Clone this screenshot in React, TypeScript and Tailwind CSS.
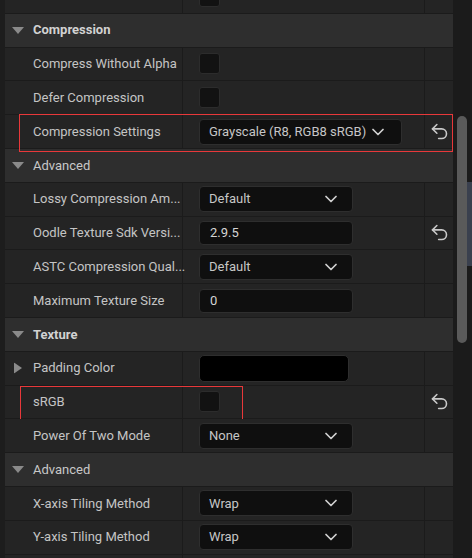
import { ReactNode } from "react";
import { ChevronDown, Undo2 } from "lucide-react";

// --- small widgets ---
function Caret({ open = true }: { open?: boolean }) {
  return open ? (
    <svg width="12" height="7" viewBox="0 0 12 7" className="shrink-0">
      <path d="M0 0h12L6 7z" fill="#8a8a8a" />
    </svg>
  ) : (
    <svg width="8" height="11" viewBox="0 0 8 11" className="shrink-0">
      <path d="M0 0v11l8-5.5z" fill="#8a8a8a" />
    </svg>
  );
}

function Checkbox() {
  return <div className="h-[21px] w-[21px] rounded-[3px] border border-[#2c2c2c] bg-[#121212]" />;
}

function Dropdown({ value, fit }: { value: string; fit?: boolean }) {
  return (
    <div
      className={
        fit
          ? "flex h-[26px] items-center gap-[2px] rounded-[4px] border border-[#2e2e2e] bg-[#0f0f0f] pl-[9px] pr-[13px] text-[#c6c6c6]"
          : "flex h-[26px] w-[154px] items-center justify-between rounded-[4px] border border-[#2e2e2e] bg-[#0f0f0f] pl-[9px] pr-[11px] text-[#c6c6c6]"
      }
    >
      <span>{value}</span>
      <ChevronDown className="h-[20px] w-[20px]" strokeWidth={2.1} color="#d0d0d0" />
    </div>
  );
}

function TextBox({ value }: { value: string }) {
  return (
    <div className="flex h-[24px] w-[154px] items-center rounded-[4px] border border-[#2e2e2e] bg-[#0f0f0f] pl-[10px] text-[#d4d4d4]">
      {value}
    </div>
  );
}

function Row({
  label,
  children,
  reset,
  arrow,
  className = "",
  highlight,
}: {
  label?: string;
  children?: ReactNode;
  reset?: boolean;
  arrow?: boolean;
  className?: string;
  highlight?: ReactNode;
}) {
  return (
    <div className={`relative flex h-[33.8px] shrink-0 border-b border-[#1b1b1b] bg-[#242424] ${className}`}>
      <div className="relative flex w-[178px] items-center border-r border-[#1b1b1b] pl-[28px] text-[#c4c4c4]">
        {arrow && (
          <span className="absolute left-[9px] top-1/2 -translate-y-1/2">
            <Caret open={false} />
          </span>
        )}
        <span className="whitespace-nowrap">{label}</span>
      </div>
      <div className="flex w-[242px] items-center border-r border-[#1b1b1b] pl-[16px]">{children}</div>
      <div className="flex w-[28px] items-center justify-center">
        {reset && <Undo2 className="h-[21px] w-[21px]" strokeWidth={1.8} color="#c8c8c8" />}
      </div>
      {highlight}
    </div>
  );
}

function Header({ title, bold = true }: { title: string; bold?: boolean }) {
  return (
    <div className="flex h-[33.8px] shrink-0 items-center gap-[9px] border-b border-[#1b1b1b] bg-[#2e2e2e] pl-[7px]">
      <Caret />
      <span className={bold ? "font-bold text-[#d2d2d2]" : "text-[#c8c8c8]"}>{title}</span>
    </div>
  );
}

export default function App() {
  return (
    <div
      className="flex h-[558px] w-[472px] overflow-hidden bg-[#1b1b1b] text-[13px]"
      style={{ fontFamily: "Roboto, 'Noto Sans', sans-serif" }}
    >
      {/* left gutter */}
      <div className="w-[5px] shrink-0 bg-[#1d1d1d]" />

      {/* property rows */}
      <div className="flex w-[448px] shrink-0 flex-col">
        <Row className="-mt-[20px]">
          <Checkbox />
        </Row>

        <Header title="Compression" />
        <Row label="Compress Without Alpha">
          <Checkbox />
        </Row>
        <Row label="Defer Compression">
          <Checkbox />
        </Row>
        <Row
          label="Compression Settings"
          reset
          highlight={
            <div className="pointer-events-none absolute -top-[1px] -bottom-[4px] left-[14px] right-0 border border-[#e8383a]" />
          }
        >
          <Dropdown value="Grayscale (R8, RGB8 sRGB)" fit />
        </Row>

        <Header title="Advanced" bold={false} />
        <Row label="Lossy Compression Am...">
          <Dropdown value="Default" />
        </Row>
        <Row label="Oodle Texture Sdk Versi..." reset>
          <TextBox value="2.9.5" />
        </Row>
        <Row label="ASTC Compression Qual...">
          <Dropdown value="Default" />
        </Row>
        <Row label="Maximum Texture Size">
          <TextBox value="0" />
        </Row>

        <Header title="Texture" />
        <Row label="Padding Color" arrow>
          <div className="h-[27px] w-[150px] rounded-[5px] border border-[#2e2e2e] bg-black" />
        </Row>
        <Row
          label="sRGB"
          reset
          highlight={
            <div className="pointer-events-none absolute top-0 -bottom-[3px] left-[15px] w-[223px] border border-[#e8383a]" />
          }
        >
          <Checkbox />
        </Row>
        <Row label="Power Of Two Mode">
          <Dropdown value="None" />
        </Row>

        <Header title="Advanced" bold={false} />
        <Row label="X-axis Tiling Method">
          <Dropdown value="Wrap" />
        </Row>
        <Row label="Y-axis Tiling Method">
          <Dropdown value="Wrap" />
        </Row>
        <Row />
      </div>

      {/* scrollbar */}
      <div className="flex w-[19px] shrink-0 pl-[4px]">
        <div className="pt-[116px]">
          <div className="h-[227px] w-[10px] rounded-full bg-[#5a5a5a]" />
        </div>
        <div className="ml-auto pt-[182px]">
          <div className="h-[84px] w-[5px] bg-[#3a404e]" />
        </div>
      </div>
    </div>
  );
}
